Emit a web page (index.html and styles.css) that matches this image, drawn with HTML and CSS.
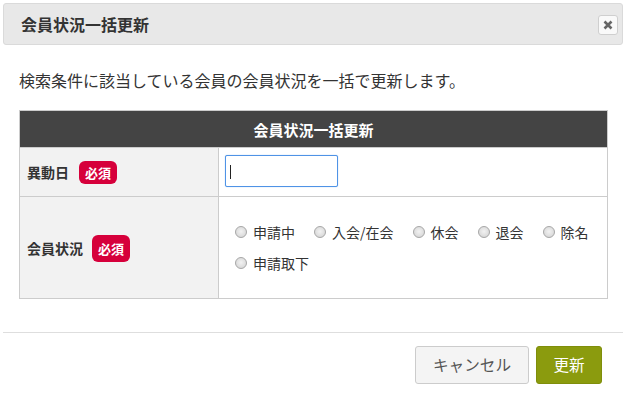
FILE: index.html
```html
<!DOCTYPE html>
<html lang="ja">
<head>
<meta charset="utf-8">
<title>会員状況一括更新</title>
<link rel="stylesheet" href="styles.css">
</head>
<body>
<div class="modal">
  <div class="modal-header">
    <h1 class="modal-title">会員状況一括更新</h1>
    <button class="close-btn" type="button" aria-label="閉じる">
      <svg width="10" height="10" viewBox="0 0 10 10"><path d="M1.5 1.5L8.5 8.5M8.5 1.5L1.5 8.5" stroke="#666" stroke-width="2.6" stroke-linecap="butt"/></svg>
    </button>
  </div>
  <div class="modal-body">
    <p class="lead">検索条件に該当している会員の会員状況を一括で更新します。</p>
    <table class="form-table">
      <thead>
        <tr><th colspan="2" class="table-head">会員状況一括更新</th></tr>
      </thead>
      <tbody>
        <tr class="row-date">
          <td class="label-cell label-date"><span class="label-text">異動日</span><span class="badge">必須</span></td>
          <td class="value-cell">
            <div class="input-wrap">
              <input class="text-input" type="text">
              <span class="caret"></span>
            </div>
          </td>
        </tr>
        <tr class="row-status">
          <td class="label-cell"><span class="label-text">会員状況</span><span class="badge badge-tall">必須</span></td>
          <td class="value-cell">
            <div class="radio-group">
              <label class="radio"><span class="radio-dot"></span>申請中</label>
              <label class="radio"><span class="radio-dot"></span>入会/在会</label>
              <label class="radio"><span class="radio-dot"></span>休会</label>
              <label class="radio"><span class="radio-dot"></span>退会</label>
              <label class="radio"><span class="radio-dot"></span>除名</label>
              <label class="radio"><span class="radio-dot"></span>申請取下</label>
            </div>
          </td>
        </tr>
      </tbody>
    </table>
  </div>
  <div class="modal-footer">
    <button class="btn btn-cancel" type="button">キャンセル</button>
    <button class="btn btn-primary" type="button">更新</button>
  </div>
</div>
</body>
</html>
```
FILE: styles.css
```css
* { box-sizing: border-box; }
html, body { margin: 0; padding: 0; background: #fff; }
body {
  font-family: "Noto Sans CJK JP", "Noto Sans", sans-serif;
  color: #333;
}
.modal {
  width: 620px;
  margin-left: 3px;
  padding-top: 3px;
}
.modal-header {
  height: 42px;
  background: #e8e8e8;
  border: 1px solid #dadada;
  border-radius: 3px;
  display: flex;
  align-items: center;
  justify-content: space-between;
  padding: 0 4px 0 17px;
}
.modal-title {
  margin: 0;
  font-size: 16px;
  font-weight: bold;
  color: #333;
  line-height: 20px;
}
.close-btn {
  width: 20px;
  height: 20px;
  padding: 0;
  border: 1px solid #cfcfcf;
  border-radius: 3px;
  background: #f9f9f9;
  display: flex;
  align-items: center;
  justify-content: center;
  margin-top: 1px;
}
.modal-body {
  padding: 0 15px 0 16px;
}
.lead {
  margin: 24px 0 0;
  height: 41px;
  font-size: 16px;
  line-height: 22px;
  color: #333;
}
.form-table {
  width: 589px;
  border-collapse: collapse;
  border: 1px solid #cccccc;
}
.table-head {
  background: #444444;
  color: #fff;
  font-size: 15px;
  font-weight: bold;
  height: 37px;
  padding: 0;
  text-align: center;
  border: 1px solid #cccccc;
}
.form-table td {
  border: 1px solid #cccccc;
  vertical-align: middle;
}
.row-date td { height: 49px; }
.row-status td { height: 102px; }
.label-cell {
  width: 199px;
  background: #f2f2f2;
  padding: 0 0 0 7px;
  white-space: nowrap;
}
.label-date {
  padding-bottom: 3px;
}
.label-text {
  font-size: 14px;
  font-weight: bold;
  color: #333;
  vertical-align: middle;
}
.badge {
  display: inline-block;
  vertical-align: middle;
  width: 38px;
  height: 23px;
  line-height: 23px;
  margin-left: 10px;
  background: #d6003b;
  color: #fff;
  font-size: 13px;
  font-weight: bold;
  text-align: center;
  border-radius: 6px;
}
.badge-tall {
  height: 27px;
  line-height: 27px;
  margin-left: 9px;
}
.value-cell {
  padding: 0 6px;
  background: #fff;
}
.input-wrap {
  position: relative;
  width: 113px;
  height: 32px;
  margin-top: -2px;
}
.text-input {
  width: 113px;
  height: 32px;
  border: 1px solid #4f93e6;
  border-radius: 2px;
  outline: none;
  padding: 0 5px;
  font-size: 14px;
  box-shadow: 0 0 1px rgba(79, 147, 230, 0.7);
}
.caret {
  position: absolute;
  left: 5px;
  top: 10px;
  width: 1px;
  height: 14px;
  background: #222;
}
.radio-group {
  display: flex;
  flex-wrap: wrap;
  column-gap: 19px;
  row-gap: 11px;
  padding-left: 10px;
  padding-right: 10px;
}
.radio {
  display: inline-flex;
  align-items: center;
  height: 20px;
  font-size: 14px;
  color: #333;
  white-space: nowrap;
}
.radio-dot {
  width: 12px;
  height: 12px;
  border-radius: 50%;
  border: 1px solid #a8a8a8;
  background: radial-gradient(circle at 50% 45%, #f2f2f2 0%, #dedede 60%, #cfcfcf 100%);
  margin-right: 6px;
  flex: none;
}
.modal-footer {
  margin-top: 33px;
  border-top: 1px solid #dedede;
  padding: 13px 21px 0 0;
  display: flex;
  justify-content: flex-end;
  gap: 7px;
}
.btn {
  height: 38px;
  font-family: "Noto Sans CJK JP", "Noto Sans", sans-serif;
  font-size: 15.6px;
  border-radius: 3px;
  padding: 0;
  line-height: 1;
}
.btn-cancel {
  width: 114px;
  background: #f4f4f4;
  border: 1px solid #cccccc;
  color: #555;
}
.btn-primary {
  width: 66px;
  background: #8b9b0e;
  border: 1px solid #7f8e0b;
  color: #fff;
}
```
